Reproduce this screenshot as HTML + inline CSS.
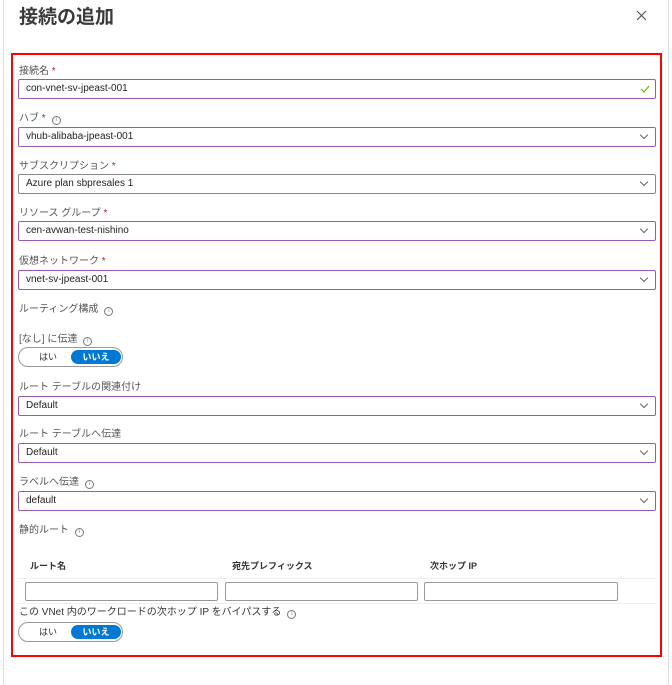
<!DOCTYPE html>
<html><head><meta charset="utf-8"><style>
*{box-sizing:border-box;margin:0;padding:0}
body{width:672px;height:685px;background:#fff;position:relative;overflow:hidden;font-family:"Liberation Sans","Noto Sans CJK JP",sans-serif;color:#323130}
.a{position:absolute}
.lbl{position:absolute;left:19px;font-size:10px;line-height:12px;color:#555;margin-top:2px}
.req{color:#a4262c}
.info{display:inline-block;width:9px;height:9px;border:1px solid #777;border-radius:50%;font-size:6px;line-height:7px;text-align:center;margin-left:6px;vertical-align:0;color:#777}
.in{position:absolute;left:18px;width:638px;height:20px;border:1px solid #9b59b6;border-radius:2px;font-size:10px;padding-left:7px;color:#222}
.in span.t{display:block;height:18px;line-height:12px;padding-top:3px}
.chev{position:absolute;right:8px;top:4px;width:6px;height:6px;border-right:1px solid #666;border-bottom:1px solid #666;transform:rotate(45deg)}
.tog{position:absolute;left:18px;width:105px;height:20px;border:1px solid #999;border-radius:10px;font-size:9px;line-height:14px}
.tog .y{position:absolute;left:20px;top:2px;color:#333}
.tog .n{position:absolute;left:52px;top:2px;width:50px;height:14px;background:#0078d4;border-radius:7px;color:#fff;text-align:center;line-height:14px;font-weight:bold}
.ti{position:absolute;top:582px;height:19px;border:1px solid #999;border-radius:2px}
.th{position:absolute;top:560px;font-size:9px;line-height:12px;font-weight:bold;color:#333}
</style></head><body>
<div class="a" style="left:3px;top:0;width:1px;height:685px;background:#ddd"></div>
<div class="a" style="left:668px;top:0;width:1px;height:685px;background:#ddd"></div>
<div class="a" style="left:19px;top:5px;font-size:19px;line-height:26px;font-weight:bold;color:#3b3b3b">接続の追加</div>
<svg class="a" style="left:636px;top:10px" width="11" height="11"><path d="M1 1L10 10M10 1L1 10" stroke="#555" stroke-width="1.2"/></svg>
<div class="a" style="left:11px;top:53px;width:651px;height:604px;border:2px solid #f00"></div>

<div class="lbl" style="top:64px">接続名 <span class="req">*</span></div>
<div class="in" style="top:79px"><span class="t">con-vnet-sv-jpeast-001</span><svg class="a" style="right:5px;top:5px" width="10" height="8"><path d="M1 4L4 7L9 1" stroke="#6bb700" stroke-width="1.2" fill="none"/></svg></div>
<div class="lbl" style="top:111px">ハブ <span class="req">*</span><span class="info">i</span></div>
<div class="in" style="top:127px"><span class="t">vhub-alibaba-jpeast-001</span><span class="chev"></span></div>
<div class="lbl" style="top:159px">サブスクリプション <span class="req">*</span></div>
<div class="in" style="top:174px;border-color:#888"><span class="t">Azure plan sbpresales 1</span><span class="chev"></span></div>
<div class="lbl" style="top:206px">リソース グループ <span class="req">*</span></div>
<div class="in" style="top:221px"><span class="t">cen-avwan-test-nishino</span><span class="chev"></span></div>
<div class="lbl" style="top:254px">仮想ネットワーク <span class="req">*</span></div>
<div class="in" style="top:270px"><span class="t">vnet-sv-jpeast-001</span><span class="chev"></span></div>
<div class="lbl" style="top:302px">ルーティング構成<span class="info">i</span></div>
<div class="lbl" style="top:332px">[なし] に伝達<span class="info">i</span></div>
<div class="tog" style="top:347px"><span class="y">はい</span><span class="n">いいえ</span></div>
<div class="lbl" style="top:380px">ルート テーブルの関連付け</div>
<div class="in" style="top:396px"><span class="t">Default</span><span class="chev"></span></div>
<div class="lbl" style="top:427px">ルート テーブルへ伝達</div>
<div class="in" style="top:443px"><span class="t">Default</span><span class="chev"></span></div>
<div class="lbl" style="top:475px">ラベルへ伝達<span class="info">i</span></div>
<div class="in" style="top:491px"><span class="t">default</span><span class="chev"></span></div>
<div class="lbl" style="top:523px">静的ルート<span class="info">i</span></div>
<div class="th" style="left:30px">ルート名</div>
<div class="th" style="left:232px">宛先プレフィックス</div>
<div class="th" style="left:430px">次ホップ IP</div>
<div class="a" style="left:18px;top:578px;width:638px;height:1px;background:#eee"></div>
<div class="ti" style="left:25px;width:193px"></div>
<div class="ti" style="left:225px;width:193px"></div>
<div class="ti" style="left:424px;width:194px"></div>
<div class="a" style="left:18px;top:603px;width:638px;height:1px;background:#eee"></div>
<div class="lbl" style="top:605px;color:#333">この VNet 内のワークロードの次ホップ IP をバイパスする<span class="info">i</span></div>
<div class="tog" style="top:622px"><span class="y">はい</span><span class="n">いいえ</span></div>
</body></html>
